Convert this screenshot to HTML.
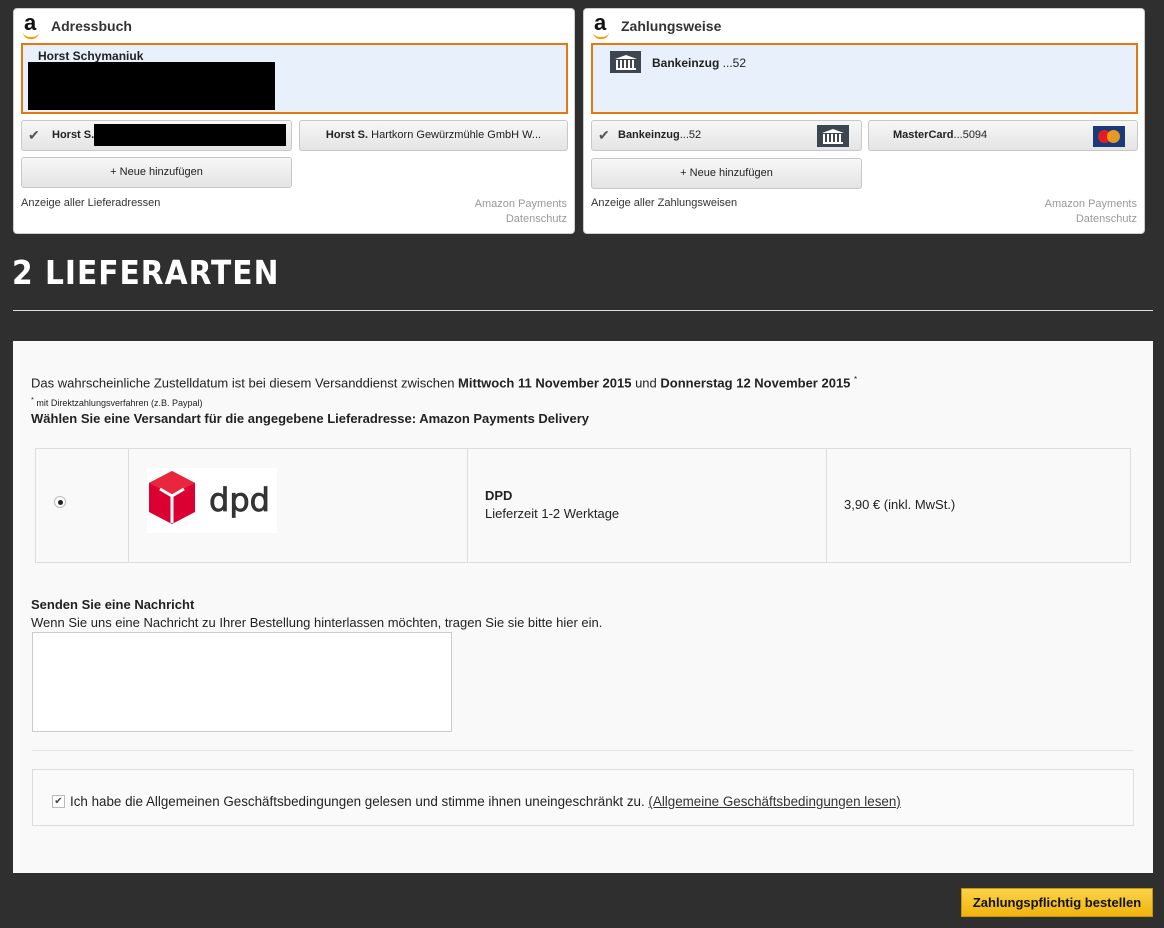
<!DOCTYPE html>
<html><head><meta charset="utf-8"><style>
*{box-sizing:border-box;margin:0;padding:0}
body{width:1164px;height:928px;background:#2f2f2f;font-family:"Liberation Sans",sans-serif;position:relative;overflow:hidden;color:#222}
.abs{position:absolute}
.w{position:absolute;top:8px;width:562px;height:226px;background:#fff;border-radius:4px;border:1px solid #ccc}
.ttl{position:absolute;left:37px;top:9px;font-size:14px;font-weight:bold;color:#333}
.logo{position:absolute;left:10px;top:4px;font-size:22px;font-weight:bold;color:#111;line-height:20px}
.logo:after{content:"";position:absolute;left:-1px;top:19px;width:16px;height:5px;border-bottom:2px solid #f90;border-radius:0 0 10px 10px}
.sel{position:absolute;left:7px;top:34px;width:547px;height:71px;border:2px solid #e47911;background:#e8f0fb}
.btn{position:absolute;height:31px;border:1px solid #c8c8c8;border-radius:3px;background:linear-gradient(#f7f7f7,#e4e4e4);font-size:11px;line-height:29px;color:#222}
.lnk{position:absolute;font-size:11px;color:#333}
.gr{position:absolute;right:7px;font-size:11px;color:#999}
.bank{position:absolute;width:32px;height:23px;background:#3d4550}
.bank:before{content:"";position:absolute;left:5px;top:4px;width:0;height:0;border-left:11px solid transparent;border-right:11px solid transparent;border-bottom:4px solid #fff}
.bank:after{content:"";position:absolute;left:6px;top:9px;width:20px;height:8px;background:repeating-linear-gradient(90deg,#fff 0 2px,transparent 2px 4px);border-bottom:2px solid #fff}
.chk{color:#555;font-size:14px}
.panel{position:absolute;left:13px;top:341px;width:1140px;height:532px;background:#f9f9f9}
.p{position:absolute;font-size:13px;color:#222}
</style></head><body>
<div class="w" style="left:13px">
 <div class="logo">a</div><div class="ttl">Adressbuch</div>
 <div class="sel"><div class="abs" style="left:15px;top:4px;font-size:12px;font-weight:bold">Horst Schymaniuk</div><div class="abs" style="left:5px;top:17px;width:247px;height:48px;background:#000"></div></div>
 <div class="btn" style="left:7px;top:111px;width:271px"><span class="chk abs" style="left:6px">✔</span><b class="abs" style="left:30px">Horst S.</b><div class="abs" style="left:72px;top:3px;width:192px;height:22px;background:#000"></div></div>
 <div class="btn" style="left:285px;top:111px;width:269px;text-align:center"><b>Horst S.</b> Hartkorn Gewürzmühle GmbH W...</div>
 <div class="btn" style="left:7px;top:148px;width:271px;text-align:center">+ Neue hinzufügen</div>
 <div class="lnk" style="left:7px;top:188px">Anzeige aller Lieferadressen</div>
 <div class="gr" style="top:189px">Amazon Payments</div><div class="gr" style="top:204px">Datenschutz</div>
</div>
<div class="w" style="left:583px">
 <div class="logo">a</div><div class="ttl">Zahlungsweise</div>
 <div class="sel"><div class="bank" style="left:17px;top:6px;width:31px;height:22px"></div><div class="abs" style="left:59px;top:11px;font-size:12px"><b>Bankeinzug</b> ...52</div></div>
 <div class="btn" style="left:7px;top:111px;width:271px"><span class="chk abs" style="left:6px">✔</span><span class="abs" style="left:26px"><b>Bankeinzug</b>...52</span><div class="bank" style="left:225px;top:4px;width:32px;height:22px"></div></div>
 <div class="btn" style="left:284px;top:111px;width:270px"><span class="abs" style="left:24px"><b>MasterCard</b>...5094</span><div class="abs" style="left:224px;top:5px;width:32px;height:21px;background:#1a3a7a"><div class="abs" style="left:5px;top:4px;width:13px;height:13px;border-radius:50%;background:#e01e26"></div><div class="abs" style="left:14px;top:4px;width:13px;height:13px;border-radius:50%;background:#f7a51c;opacity:.9"></div></div></div>
 <div class="btn" style="left:7px;top:149px;width:271px;text-align:center">+ Neue hinzufügen</div>
 <div class="lnk" style="left:7px;top:188px">Anzeige aller Zahlungsweisen</div>
 <div class="gr" style="top:189px">Amazon Payments</div><div class="gr" style="top:204px">Datenschutz</div>
</div>
<div class="abs" style="left:12px;top:253px;font-size:33px;font-weight:bold;letter-spacing:1px;color:#fff;font-family:'DejaVu Sans Condensed','Liberation Sans',sans-serif">2 LIEFERARTEN</div>
<div class="abs" style="left:13px;top:310px;width:1140px;height:1px;background:#ddd"></div>
<div class="panel">
 <div class="p" style="left:18px;top:34px">Das wahrscheinliche Zustelldatum ist bei diesem Versanddienst zwischen <b>Mittwoch 11 November 2015</b> und <b>Donnerstag 12 November 2015</b> <sup style="font-size:8px">*</sup></div>
 <div class="p" style="left:18px;top:54px;font-size:9px"><sup>*</sup> mit Direktzahlungsverfahren (z.B. Paypal)</div>
 <div class="p" style="left:18px;top:70px;font-weight:bold">Wählen Sie eine Versandart für die angegebene Lieferadresse: Amazon Payments Delivery</div>
 <div class="abs" style="left:22px;top:107px;width:1096px;height:115px;border:1px solid #ddd">
  <div class="abs" style="left:92px;top:0;width:1px;height:113px;background:#ddd"></div>
  <div class="abs" style="left:431px;top:0;width:1px;height:113px;background:#ddd"></div>
  <div class="abs" style="left:790px;top:0;width:1px;height:113px;background:#ddd"></div>
  <div class="abs" style="left:18px;top:47px;width:12px;height:12px;border-radius:50%;border:1px solid #bbb;background:#fff"><div class="abs" style="left:3px;top:3px;width:5px;height:5px;border-radius:50%;background:#222"></div></div>
  <div class="abs" style="left:111px;top:19px;width:130px;height:65px;background:#fff">
   <svg width="130" height="65" viewBox="0 0 130 65"><polygon points="2,15 25,3 48,15 48,44 25,56 2,44" fill="#dc0032"/><polygon points="2,15 25,3 48,15 25,27" fill="#e8273f"/><path d="M25 28 V55 M25 28 L13 21 M25 28 L37 21" stroke="#fff" stroke-width="3" fill="none"/><text x="62" y="43" font-family="DejaVu Sans,sans-serif" font-size="32" fill="#333" stroke="#333" stroke-width="0.8">dpd</text></svg>
  </div>
  <div class="p" style="left:449px;top:39px;font-weight:bold">DPD</div>
  <div class="p" style="left:449px;top:57px">Lieferzeit 1-2 Werktage</div>
  <div class="p" style="left:808px;top:48px">3,90 € (inkl. MwSt.)</div>
 </div>
 <div class="p" style="left:18px;top:256px;font-weight:bold">Senden Sie eine Nachricht</div>
 <div class="p" style="left:18px;top:274px">Wenn Sie uns eine Nachricht zu Ihrer Bestellung hinterlassen möchten, tragen Sie sie bitte hier ein.</div>
 <div class="abs" style="left:19px;top:291px;width:420px;height:100px;background:#fff;border:1px solid #ccc"></div>
 <div class="abs" style="left:19px;top:409px;width:1102px;height:1px;background:#e6e6e6"></div>
 <div class="abs" style="left:19px;top:428px;width:1102px;height:57px;border:1px solid #ddd;background:#fafafa">
  <div class="abs" style="left:19px;top:25px;width:13px;height:13px;border:1px solid #bbb;background:#fff;font-size:10px;line-height:11px;text-align:center;color:#444">✔</div>
  <div class="p" style="left:37px;top:24px;font-size:13.4px">Ich habe die Allgemeinen Geschäftsbedingungen gelesen und stimme ihnen uneingeschränkt zu. <u style="color:#333">(Allgemeine Geschäftsbedingungen lesen)</u></div>
 </div>
</div>
<div class="abs" style="left:961px;top:888px;width:192px;height:29px;background:linear-gradient(#f9d44a,#f1b30c);border:1px solid #c99400;font-size:13px;font-weight:bold;text-align:center;line-height:27px;color:#111">Zahlungspflichtig bestellen</div>
</body></html>
